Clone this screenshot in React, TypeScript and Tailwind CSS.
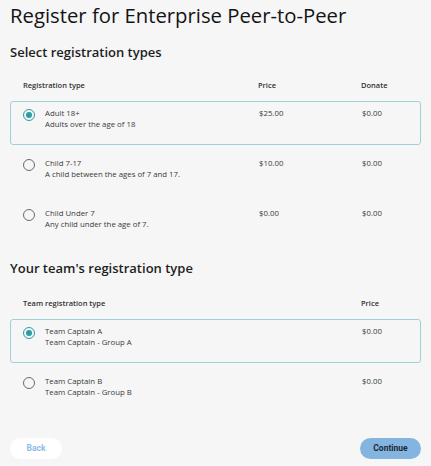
import React from "react";

const font = { fontFamily: '"Open Sans", "Noto Sans", sans-serif' };

function Radio({ checked }: { checked: boolean }) {
  return checked ? (
    <span className="flex h-[12px] w-[12px] shrink-0 items-center justify-center rounded-full border-[1.5px] border-[#2a9ca3]">
      <span className="h-[6px] w-[6px] rounded-full bg-[#2a9ca3]" />
    </span>
  ) : (
    <span className="h-[12px] w-[12px] shrink-0 rounded-full border-[1.5px] border-[#6b6b6b]" />
  );
}

type Row = { title: string; desc: string; price: string; donate?: string; checked: boolean };

function RowItem({ r, twoCols }: { r: Row; twoCols: boolean }) {
  return (
    <div
      className={
        "flex h-[44px] items-start rounded-[3px] border pt-[6px] " +
        (r.checked ? "border-[#9fd0d5]" : "border-transparent")
      }
    >
      <div className="flex w-[248px] items-start">
        <div className="flex w-[30px] justify-end pr-[6px] pt-[1px]">
          <Radio checked={r.checked} />
        </div>
        <div className="ml-[4px] text-[7.8px] leading-[11px] text-[#3a3a3a]">
          <div>{r.title}</div>
          <div>{r.desc}</div>
        </div>
      </div>
      {twoCols ? (
        <>
          <div className="w-[103px] text-[7.8px] leading-[11px] text-[#3a3a3a]">{r.price}</div>
          <div className="text-[7.8px] leading-[11px] text-[#3a3a3a]">{r.donate}</div>
        </>
      ) : (
        <>
          <div className="w-[103px]" />
          <div className="text-[7.8px] leading-[11px] text-[#3a3a3a]">{r.price}</div>
        </>
      )}
    </div>
  );
}

export default function App() {
  const rows: Row[] = [
    { title: "Adult 18+", desc: "Adults over the age of 18", price: "$25.00", donate: "$0.00", checked: true },
    { title: "Child 7-17", desc: "A child between the ages of 7 and 17.", price: "$10.00", donate: "$0.00", checked: false },
    { title: "Child Under 7", desc: "Any child under the age of 7.", price: "$0.00", donate: "$0.00", checked: false },
  ];
  const team: Row[] = [
    { title: "Team Captain A", desc: "Team Captain - Group A", price: "$0.00", checked: true },
    { title: "Team Captain B", desc: "Team Captain - Group B", price: "$0.00", checked: false },
  ];
  return (
    <div className="min-h-[466px] w-[431px] bg-[#f6f6f6] px-[10px] pt-[1px]" style={font}>
      <h1 className="text-[20.3px] leading-[28px] font-medium text-[#141414]">Register for Enterprise Peer-to-Peer</h1>
      <h2 className="mt-[13px] text-[13px] leading-[20px] font-semibold text-[#1e1e1e]">Select registration types</h2>
      <div className="mt-[18px] flex text-[7.5px] leading-[11px] font-semibold text-[#333]">
        <div className="w-[248px] pl-[13px]">Registration type</div>
        <div className="w-[103px]">Price</div>
        <div>Donate</div>
      </div>
      <div className="mt-[10px] flex flex-col gap-[6px]">
        {rows.map((r) => (
          <RowItem key={r.title} r={r} twoCols />
        ))}
      </div>
      <h2 className="mt-[13px] text-[13px] leading-[20px] font-semibold text-[#1e1e1e]">Your team's registration type</h2>
      <div className="mt-[20px] flex text-[7.5px] leading-[11px] font-semibold text-[#333]">
        <div className="w-[248px] pl-[13px]">Team registration type</div>
        <div className="w-[103px]" />
        <div>Price</div>
      </div>
      <div className="mt-[10px] flex flex-col gap-[6px]">
        {team.map((r) => (
          <RowItem key={r.title} r={r} twoCols={false} />
        ))}
      </div>
      <div className="mt-[25px] flex items-center justify-between pb-[8px]">
        <button
          className="h-[21px] w-[52px] rounded-full bg-white text-[8.5px] font-bold text-[#8dbbe6]"
          style={{ fontFamily: 'Roboto, "Liberation Sans", sans-serif' }}
        >
          Back
        </button>
        <button
          className="h-[21px] w-[61px] rounded-full bg-[#84b5e1] text-[8.5px] font-bold text-[#1b2733]"
          style={{ fontFamily: 'Roboto, "Liberation Sans", sans-serif' }}
        >
          Continue
        </button>
      </div>
    </div>
  );
}
